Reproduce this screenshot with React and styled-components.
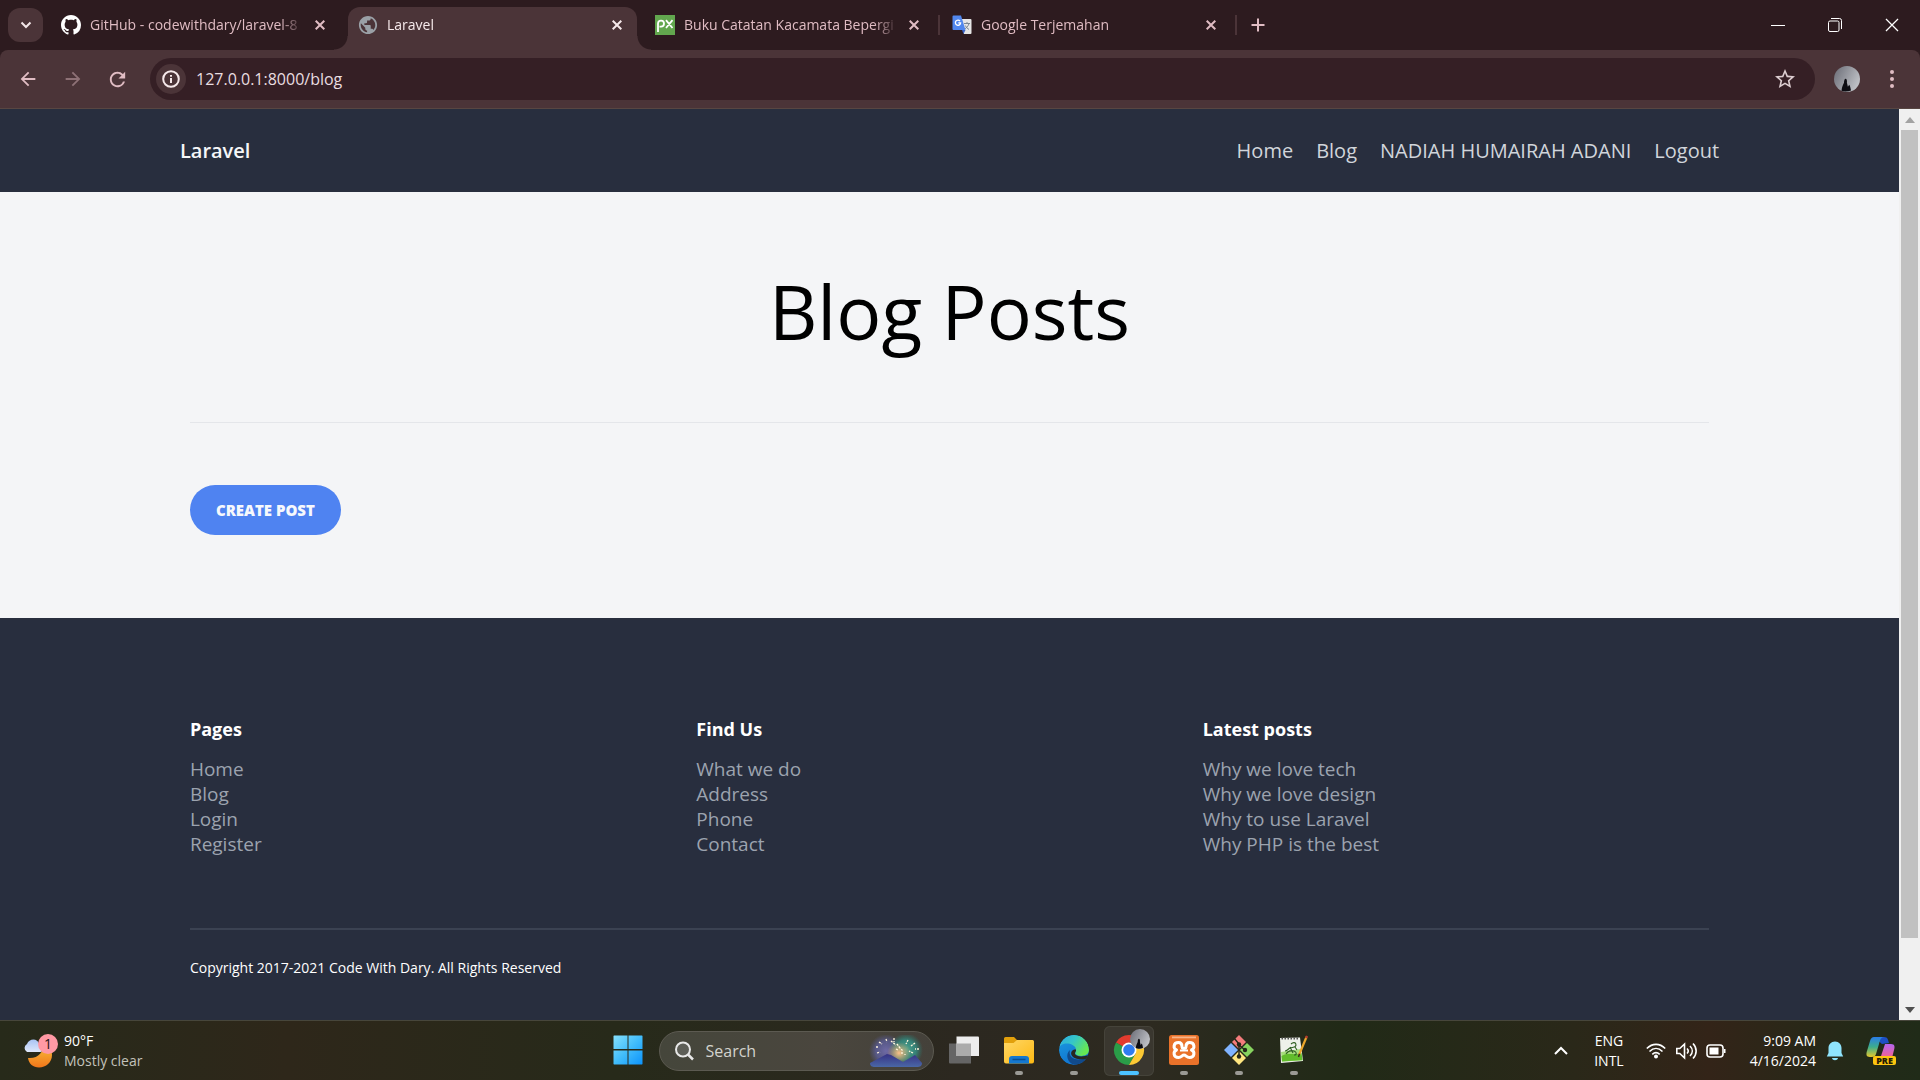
import React from "react";
import styled, { createGlobalStyle, css } from "styled-components";
import { MdArrowBack, MdArrowForward, MdPublic, MdRefresh, MdStarBorder } from "react-icons/md";

const color = {
  frame: "#2d1b1f",
  toolbar: "#4b3438",
  omnibox: "#351f25",
  pink: "#e0bcc3",
  navy: "#282e3e",
  page: "#f4f5f7",
};

const GlobalStyle = createGlobalStyle`
  *, *::before, *::after { box-sizing: border-box; }
  body {
    margin: 0;
    font-family: "Open Sans", "Noto Sans", sans-serif;
    background: ${color.page};
  }
  button, input { font: inherit; color: inherit; border: 0; padding: 0; background: none; }
  a { color: inherit; text-decoration: none; }
  h1, h2, p, ul { margin: 0; padding: 0; }
  svg { display: block; flex: none; }
`;

const Screen = styled.div`
  display: flex;
  flex-direction: column;
  min-height: 100vh;
`;

/* ---------- browser frame ---------- */

const TabStrip = styled.header`
  display: flex;
  align-items: flex-start;
  height: 50px;
  padding-left: 8px;
  background: ${color.frame};
  color: ${color.pink};
`;

const TabSearch = styled.button`
  display: grid;
  place-items: center;
  width: 35px;
  height: 34px;
  margin: 8px 8px 0 0;
  border-radius: 12px;
  background: ${color.toolbar};
  color: #f3e6e8;
`;

const TabList = styled.div`
  display: flex;
  gap: 8px;
`;

const Tab = styled.div`
  position: relative;
  display: flex;
  align-items: center;
  gap: 9px;
  width: 289px;
  height: 43px;
  margin-top: 7px;
  padding: 0 13px 7px 10px;
  border-radius: 12px 12px 0 0;
  font-size: 14px;
  line-height: 20px;

  ${(p) =>
    p.$active &&
    css`
      background: ${color.toolbar};
      color: #f6e9eb;
      &::before,
      &::after {
        content: "";
        position: absolute;
        bottom: 0;
        width: 14px;
        height: 14px;
      }
      &::before {
        left: -14px;
        background: radial-gradient(circle at 0 0, transparent 13px, ${color.toolbar} 14px);
      }
      &::after {
        right: -14px;
        background: radial-gradient(circle at 100% 0, transparent 13px, ${color.toolbar} 14px);
      }
    `}

  ${(p) =>
    p.$divided &&
    css`
      &::after {
        content: "";
        position: absolute;
        right: -6px;
        top: 8px;
        width: 2px;
        height: 20px;
        background: ${color.toolbar};
      }
    `}
`;

const TabTitle = styled.span`
  flex: 1;
  min-width: 0;
  overflow: hidden;
  white-space: nowrap;
  mask-image: linear-gradient(to right, #000 calc(100% - 24px), transparent);
`;

const PlainButton = styled.button`
  display: grid;
  place-items: center;
  width: 14px;
  height: 20px;
`;

const NewTab = styled(PlainButton)`
  width: 30px;
  margin: 15px 0 0 12px;
`;

const WindowControls = styled.div`
  display: flex;
  margin-left: auto;
  color: #fff;
`;

const WindowButton = styled(PlainButton)`
  width: 57px;
  height: 49px;
`;

const ToolbarBack = styled.div`
  background: ${color.frame};
`;

const Toolbar = styled.div`
  display: flex;
  align-items: center;
  height: 59px;
  padding: 0 20px 0 10px;
  border-bottom: 1px solid #584642;
  border-radius: 8px 8px 0 0;
  background: ${color.toolbar};
  color: ${color.pink};
`;

const ToolButton = styled.button`
  display: grid;
  place-items: center;
  width: 35px;
  height: 35px;
  margin-right: 10px;
  opacity: ${(p) => (p.disabled ? 0.45 : 1)};
  color: inherit;
`;

const Omnibox = styled.form`
  display: flex;
  flex: 1;
  align-items: center;
  height: 42px;
  margin-left: 5px;
  padding: 0 18px 0 6px;
  border-radius: 21px;
  background: ${color.omnibox};
`;

const SiteInfo = styled.button`
  display: grid;
  place-items: center;
  width: 30px;
  height: 30px;
  margin-right: 10px;
  border-radius: 50%;
  background: ${color.toolbar};
  color: #f6e9eb;
`;

const Address = styled.input`
  flex: 1;
  min-width: 0;
  height: 30px;
  font-size: 16px;
  color: #e9dde0;
  outline: none;
`;

const StarButton = styled(PlainButton)`
  width: 24px;
  height: 24px;
`;

const ProfileButton = styled(PlainButton)`
  width: 26px;
  height: 26px;
  margin: 0 24px 0 19px;
`;

const MenuButton = styled(PlainButton)`
  width: 16px;
  height: 26px;
`;

const Viewport = styled.div`
  display: flex;
  flex: 1;
`;

const Page = styled.div`
  display: flex;
  flex: 1;
  flex-direction: column;
  min-width: 0;
`;

const Scrollbar = styled.div`
  display: flex;
  flex-direction: column;
  align-items: center;
  width: 21px;
  background: #f0f0f0;
`;

const ScrollArrow = styled(PlainButton)`
  width: 21px;
  height: 21px;
  color: ${(p) => (p.$dim ? "#a3a3a3" : "#505050")};
`;

const ScrollThumb = styled.div`
  flex: 93;
  width: 17px;
  background: #c1c1c1;
`;

const ScrollRest = styled.div`
  flex: 7;
`;

/* ---------- blog page ---------- */

const SiteHeader = styled.header`
  background: ${color.navy};
`;

const SiteNav = styled.div`
  display: flex;
  align-items: center;
  justify-content: space-between;
  width: calc(80% + 20px);
  height: 83px;
  margin: 0 auto;
  color: #d1d5db;
`;

const Brand = styled.a`
  font-size: 20px;
  font-weight: 600;
  color: #f5f6f8;
`;

const NavLinks = styled.nav`
  display: flex;
  gap: 23px;
  font-size: 20px;
  line-height: 28px;
`;

const Main = styled.main`
  width: 80%;
  margin: 0 auto;
  padding-bottom: 83px;
`;

const TitleBlock = styled.div`
  padding: 69px 0 61px;
  border-bottom: 1px solid #e4e6ea;
  text-align: center;
`;

const Title = styled.h1`
  font-size: 75px;
  font-weight: 400;
  line-height: 100px;
  color: #000;
`;

const CreateLink = styled.a`
  display: inline-block;
  margin-top: 62px;
  padding: 0 26px;
  border-radius: 25px;
  background: #4f83f1;
  color: #f6f8fc;
  font-size: 15px;
  font-weight: 800;
  line-height: 50px;
  text-transform: uppercase;
  vertical-align: top;
`;

const Footer = styled.footer`
  flex: 1;
  padding-top: 99px;
  background: ${color.navy};
`;

const FooterInner = styled.div`
  width: 80%;
  margin: 0 auto;
`;

const FooterColumns = styled.div`
  display: grid;
  grid-template-columns: repeat(3, 1fr);
  padding-bottom: 71px;
  border-bottom: 2px solid #3b4252;
`;

const ColumnTitle = styled.h2`
  margin-bottom: 15px;
  font-size: 18px;
  font-weight: 700;
  line-height: 25px;
  color: #fff;
`;

const ColumnLinks = styled.ul`
  list-style: none;
  font-size: 19px;
  line-height: 25px;
  color: #9ca3af;
`;

const Copyright = styled.p`
  padding: 25px 0;
  font-size: 14px;
  line-height: 25px;
  color: #fff;
`;

/* ---------- taskbar ---------- */

const Taskbar = styled.footer`
  display: grid;
  grid-template-columns: 1fr auto 1fr;
  align-items: center;
  height: 60px;
  border-top: 1px solid #47463b;
  background: linear-gradient(
    90deg,
    #272a1a 0%,
    #2e271a 15%,
    #272a1a 32%,
    #2c2820 50%,
    #2d2a20 60%,
    #212a17 70%,
    #2a2819 82%,
    #332418 89%,
    #232a18 97%,
    #202b18 100%
  );
  color: #fff;
`;

const Weather = styled.button`
  display: flex;
  align-items: center;
  gap: 6px;
  justify-self: start;
  padding-left: 22px;
  text-align: left;
`;

const TwoLines = styled.span`
  display: grid;
  font-size: 14px;
  line-height: 20px;
  text-align: ${(p) => p.$align || "left"};
`;

const Muted = styled.span`
  color: #c3c2bb;
`;

const Apps = styled.div`
  display: flex;
  align-items: center;
  margin-left: 6px;
`;

const AppButton = styled.button`
  display: flex;
  flex-direction: column;
  align-items: center;
  width: 50px;
  height: 50px;
  margin: 0 ${(p) => p.$gap ?? 5}px 0 0;
  padding-top: 9px;
  border-radius: 6px;

  ${(p) =>
    p.$active &&
    css`
      background: #3a372f;
      box-shadow: inset 0 0 0 1px #45433a;
    `}

  &::after {
    content: "";
    width: ${(p) => (p.$active ? 20 : 8)}px;
    height: 4px;
    margin-top: 6px;
    border-radius: 2px;
    background: ${(p) => (p.$active ? "#4cc2ff" : p.$running ? "#9b9a95" : "transparent")};
  }
`;

const TaskSearch = styled.label`
  display: flex;
  align-items: center;
  gap: 12px;
  width: 275px;
  height: 40px;
  margin-right: 5px;
  padding: 0 10px 0 14px;
  border: 1px solid #5c5a51;
  border-radius: 20px;
  background: linear-gradient(90deg, #45463b, #4a463e 60%, #44413a);
`;

const SearchField = styled.input`
  flex: 1;
  width: 60px;
  font-size: 16px;
  color: #d8d8d3;
  outline: none;
  &::placeholder {
    color: #d3d3cd;
    opacity: 1;
  }
`;

const Tray = styled.div`
  display: flex;
  align-items: center;
  justify-self: end;
  padding-right: 24px;
`;

const TrayButton = styled.button`
  display: flex;
  align-items: center;
  gap: 10px;
  margin-left: ${(p) => p.$space || 0}px;
`;

/* ---------- drawings ---------- */

const Cross = ({ size = 10, weight = 2 }) => (
  <svg width={size} height={size} viewBox="0 0 10 10" stroke="currentColor" strokeWidth={weight} fill="none">
    <path d="M.7.7l8.6 8.6M9.3.7L.7 9.3" />
  </svg>
);

const GithubMark = () => (
  <svg width="20" height="20" viewBox="0 0 16 16" fill="#fff">
    <path d="M8 0C3.58 0 0 3.58 0 8c0 3.54 2.29 6.53 5.47 7.59.4.07.55-.17.55-.38 0-.19-.01-.82-.01-1.49-2.01.37-2.53-.49-2.69-.94-.09-.23-.48-.94-.82-1.13-.28-.15-.68-.52-.01-.53.63-.01 1.08.58 1.23.82.72 1.21 1.87.87 2.33.66.07-.52.28-.87.51-1.07-1.78-.2-3.64-.89-3.64-3.95 0-.87.31-1.59.82-2.15-.08-.2-.36-1.02.08-2.12 0 0 .67-.21 2.2.82.64-.18 1.32-.27 2-.27s1.36.09 2 .27c1.53-1.04 2.2-.82 2.2-.82.44 1.1.16 1.92.08 2.12.51.56.82 1.27.82 2.15 0 3.07-1.87 3.75-3.65 3.95.29.25.54.73.54 1.48 0 1.07-.01 1.93-.01 2.2 0 .21.15.46.55.38A8.01 8.01 0 0 0 16 8c0-4.42-3.58-8-8-8z" />
  </svg>
);

const Globe = () => (
  <svg width="20" height="20" viewBox="1 1 22 22">
    <MdPublic size={24} color="#9aa0a6" />
  </svg>
);

const PxLogo = () => (
  <svg width="20" height="20" viewBox="0 0 20 20">
    <path fill="#62a74e" d="M0 0h20v20H0z" />
    <path
      d="M3 17V8.500a3 3 0 1 1 3 3.200H4.500M11 5.200l6.500 7.800M17.500 5.200L11 13"
      fill="none"
      stroke="#fff"
      strokeWidth="1.800"
    />
  </svg>
);

const TranslateLogo = () => (
  <svg width="20" height="20" viewBox="0 0 20 20">
    <path fill="#e6e6e6" d="M9 4h9.500a1 1 0 0 1 1 1v13a1 1 0 0 1-1 1H12z" />
    <path d="M12 8.500h6M15 7v1.500M17 8.500c-.6 2.500-2.500 4.500-4.500 5.500M13.300 10.500c.8 1.800 2 3 3.700 4" stroke="#7b8794" fill="none" />
    <path fill="#5187ee" d="M1.500.5H9L13.500 15H1.500a1 1 0 0 1-1-1V1.500a1 1 0 0 1 1-1z" />
    <path fill="#3a63c8" d="M10 15h3.500L11.500 19z" />
    <path d="M8 6a2.600 2.600 0 1 0 .6 1.900H6.300" fill="none" stroke="#fff" strokeWidth="1.300" />
  </svg>
);

const Silhouette = ({ size = 26 }) => (
  <svg width={size} height={size} viewBox="0 0 26 26">
    <defs>
      <linearGradient id="sky" x1="0" y1="0" x2="1" y2=".5">
        <stop offset="0" stopColor="#696b75" />
        <stop offset="1" stopColor="#bdbfc4" />
      </linearGradient>
    </defs>
    <circle cx="13" cy="13" r="13" fill="url(#sky)" />
    <path d="M7.500 24.800c.5-4 1.500-6 2.500-8 0-2 .6-4 1.600-4s1.700 2 1.300 4l1 4 1.300-2c1 1 1.200 3 1.800 5.700-3 1.300-7 1.500-9.500.3z" fill="#0c0c12" />
  </svg>
);

const WeatherIcon = () => (
  <svg width="36" height="36" viewBox="0 0 36 36">
    <defs>
      <linearGradient id="moon" x1="0" y1="0" x2="0" y2="1">
        <stop offset="0" stopColor="#f9c23c" />
        <stop offset="1" stopColor="#f0761a" />
      </linearGradient>
      <linearGradient id="cloud" x1="0" y1="0" x2="0" y2="1">
        <stop offset="0" stopColor="#a9c3f3" />
        <stop offset="1" stopColor="#dfe8fb" />
      </linearGradient>
    </defs>
    <path d="M21 11c1 8-5 15-15 14 1 6 5 9.500 11 9.500 7 0 13-5 13-12.500 0-5-3-9-9-11z" fill="url(#moon)" />
    <path d="M5 19a4.500 4.500 0 0 1 0-8c2-6 11-6 12 0 5 0 5 8 1 8z" fill="url(#cloud)" />
    <circle cx="26" cy="11" r="10" fill="#ff99a4" />
    <text x="26" y="16" textAnchor="middle" fontSize="14" fill="#1c1214">1</text>
  </svg>
);

const WindowsLogo = () => (
  <svg width="30" height="30" viewBox="0 0 30 30">
    <defs>
      <linearGradient id="win" x1="0" y1="0" x2="1" y2="1">
        <stop offset="0" stopColor="#86e1fd" />
        <stop offset=".5" stopColor="#42bdfb" />
        <stop offset="1" stopColor="#0c93fb" />
      </linearGradient>
    </defs>
    <path fill="url(#win)" d="M1 .5h13.500V14H.5V1zM15.500.5H29l.5.5v13h-14zM.5 15.500h14v14H1l-.5-.5zM15.500 15.500h14V29l-.5.5H15.500z" />
  </svg>
);

const Magnifier = () => (
  <svg width="20" height="20" viewBox="0 0 20 20" fill="none" stroke="#e8e8e8" strokeWidth="2">
    <circle cx="9" cy="8.500" r="7" fill="#5d5e57" />
    <path d="M14 13.500l5 5" strokeWidth="2.500" />
  </svg>
);

const Fireworks = () => (
  <svg width="54" height="32" viewBox="0 0 54 32">
    <defs>
      <radialGradient id="glowA">
        <stop offset="0" stopColor="#6f6aa5" />
        <stop offset=".6" stopColor="#5b5d98" stopOpacity=".8" />
        <stop offset="1" stopColor="#56598c" stopOpacity="0" />
      </radialGradient>
      <radialGradient id="glowB">
        <stop offset="0" stopColor="#4da792" />
        <stop offset=".6" stopColor="#34877c" stopOpacity=".9" />
        <stop offset="1" stopColor="#2d766c" stopOpacity="0" />
      </radialGradient>
      <radialGradient id="glowC">
        <stop offset="0" stopColor="#ffc18a" />
        <stop offset="1" stopColor="#e5a35f" stopOpacity="0" />
      </radialGradient>
      <linearGradient id="hill" x1="0" y1="0" x2="0" y2="1">
        <stop offset="0" stopColor="#373284" />
        <stop offset="1" stopColor="#4a67a6" />
      </linearGradient>
    </defs>
    <circle cx="17" cy="16" r="17" fill="url(#glowA)" />
    <circle cx="37" cy="15" r="17" fill="url(#glowB)" />
    <ellipse cx="30" cy="18" rx="12" ry="11" fill="url(#glowC)" />
    <path d="M1 28L18 19l4 1 12 7 12-7 7 8c0 3-2 4-5 4H6c-3 0-5-1-5-4z" fill="url(#hill)" />
    <path
      d="M10 7l3 2M7 12h3M8 18l3-1M17 4l1 3M25 3v4M22 6l5 4M28 9l3 4M30 12l4 4M39 5l-2 4M46 8l-4 3M50 14h-4M44 18l-4-2M33 17v2M36 19v1M27 14l2 1"
      stroke="#fff5dc"
      strokeWidth="1.300"
      strokeDasharray="2 1"
    />
  </svg>
);

const TaskView = () => (
  <svg width="30" height="30" viewBox="0 0 30 30">
    <path fill="#656565" d="M0 8.500h22v20H1a1 1 0 0 1-1-1z" />
    <path fill="#ededed" d="M7.500 1.500H29a1 1 0 0 1 1 1V21H7.500z" />
    <path fill="#ababab" d="M7.500 8.500H22V21H7.500z" />
  </svg>
);

const Folder = () => (
  <svg width="30" height="30" viewBox="0 0 30 30">
    <defs>
      <linearGradient id="folder" x1="0" y1="0" x2="1" y2="1">
        <stop offset="0" stopColor="#ffd766" />
        <stop offset="1" stopColor="#fdb913" />
      </linearGradient>
    </defs>
    <path fill="#e2a00b" d="M0 3.500A1.500 1.500 0 0 1 1.500 2H10l3 3h16v5H0z" />
    <path fill="url(#folder)" d="M0 8h9.500L13 5h15.500A1.500 1.500 0 0 1 30 6.500v20a2 2 0 0 1-2 2H2a2 2 0 0 1-2-2z" />
    <path fill="#1578cf" d="M5 28.500V24a3 3 0 0 1 3-3h14a3 3 0 0 1 3 3v4.500z" />
    <path d="M8.500 24.500h13" stroke="#0a4f93" strokeWidth="1.500" />
  </svg>
);

const Edge = () => (
  <svg width="30" height="30" viewBox="0 0 30 30">
    <defs>
      <linearGradient id="edgeTop" x1="0" y1="0" x2="1" y2=".5">
        <stop offset="0" stopColor="#2aa8e6" />
        <stop offset=".5" stopColor="#36c6c7" />
        <stop offset="1" stopColor="#66e752" />
      </linearGradient>
      <linearGradient id="edgeSide" x1="0" y1="0" x2=".4" y2="1">
        <stop offset="0" stopColor="#1b9de2" />
        <stop offset="1" stopColor="#1173cf" />
      </linearGradient>
      <clipPath id="edgeRound">
        <circle cx="15" cy="15" r="15" />
      </clipPath>
    </defs>
    <g clipPath="url(#edgeRound)">
      <circle cx="15" cy="15" r="15" fill="url(#edgeSide)" />
      <path d="M11 15c-2 7 4 12 17 8-3 5-8 7-12 7-8-2-10-11-5-15z" fill="#114a8b" />
      <path d="M0 14C1 8 9 7.500 13.500 10c3 1.500 4 4 3.500 6-.3 1.500-1 2-.5 3C19 22 30 22 30 15 30 6 23 0 15 0 7 0 1 5 0 14z" fill="url(#edgeTop)" />
      <path d="M17 14.500c.5 2-1.500 2.500-1 4.500 1.500 3 8 3 14 1v3c-6 2-15 2-17.500-3-1.200-3 1-6 4.500-5.500z" fill="#29281f" />
    </g>
  </svg>
);

const Chrome = () => (
  <svg width="36" height="30" viewBox="0 0 36 30" overflow="visible">
    <path d="M18 15L5 7.500A15 15 0 0 1 31 7.500H18z" fill="#e33b2e" />
    <path d="M5 7.500A15 15 0 0 0 18 30l6.500-11.250L18 15z" fill="#2a9d48" />
    <path d="M31 7.500A15 15 0 0 1 18 30l6.500-11.250V7.500z" fill="#fcc934" />
    <circle cx="18" cy="15" r="7.500" fill="#fff" />
    <circle cx="18" cy="15" r="5.800" fill="#2f7cf0" />
    <g transform="translate(19 -6)">
      <Silhouette size={20} />
    </g>
  </svg>
);

const Xampp = () => (
  <svg width="30" height="30" viewBox="0 0 30 30">
    <rect width="30" height="30" rx="2.500" fill="#e9722a" />
    <path d="M3 1.500h24v1.800H3z" fill="#f7b48a" />
    <path
      d="M9.500 7.500c-5.500 0-5.500 6-2 7.500-3.500 1.500-3.500 7.500 2 7.500 3 0 3.500-2.500 5.500-2.500s2.500 2.500 5.500 2.500c5.500 0 5.500-6 2-7.500 3.500-1.500 3.500-7.500-2-7.500-2.800 0-3.500 2.500-3.500 4s-1 2-2 2-2-.5-2-2 -.7-4-3.500-4z"
      fill="none"
      stroke="#fff"
      strokeWidth="3"
      strokeLinejoin="round"
    />
    <path d="M11 15.500h8" stroke="#fff" strokeWidth="2" />
  </svg>
);

const GitBash = () => (
  <svg width="30" height="30" viewBox="0 0 30 30">
    <path fill="#f47c7c" d="M15 0l7 7-7 7-7-7z" />
    <path fill="#80b3ff" d="M7 8l7 7-7 7-7-7z" />
    <path fill="#87d35f" d="M23 8l7 7-7 7-7-7z" />
    <path fill="#ffe680" d="M15 16l7 7-7 7-7-7z" />
    <path d="M10 3l5 6v13M15 10l6 5" stroke="#25271a" strokeWidth="1.500" fill="none" />
    <g fill="#25271a">
      <circle cx="15" cy="9.500" r="2.200" />
      <circle cx="15" cy="21.500" r="2.200" />
      <circle cx="21" cy="15" r="2.200" />
    </g>
  </svg>
);

const NotepadPlus = () => (
  <svg width="30" height="30" viewBox="0 0 30 30">
    <path fill="#eef1ea" d="M1 3l20-.5 3 23.500-22 2z" />
    <path fill="#a6dc7c" d="M2 17l19.500-3 1.700 11.500L3 26.500z" />
    <path fill="#62bd2c" d="M2.500 21c7-4 13 0 20-3l1 7L3 26.500z" />
    <path d="M2.500 3.500h18" stroke="#555" strokeWidth="1.800" strokeDasharray="1.500 1.500" />
    <path d="M12 9c2-2 5-2 5 1s-4 2-6 3-3 3-5 3M7 19c2-3 5-4 8-3s3 4 0 4M11 12l3 6M16 12l2 3" stroke="#2f5f22" strokeWidth="1.100" fill="none" />
    <path d="M27.500 2L20 20" stroke="#eca72c" strokeWidth="2.200" />
    <path d="M28 .8l-1 2.400" stroke="#b5392f" strokeWidth="2.200" />
    <path d="M20.500 18.800L19.500 22" stroke="#3a2d1b" strokeWidth="1.500" />
  </svg>
);

const StatusIcons = () => (
  <svg width="80" height="20" viewBox="0 0 80 20" fill="none" stroke="#fff" strokeWidth="1.600">
    <path d="M.8 7.500c5.500-5.500 13-5.500 18.400 0M3.500 10.500c4-4 9-4 13 0M6.300 13.300c2.300-2.200 5-2.200 7.400 0" />
    <circle cx="10" cy="15.500" r="1.200" fill="#fff" />
    <path d="M30.800 7.500h3L38.500 3v14l-4.700-4.500h-3zM41 7.500c1.500 1.500 1.500 3.500 0 5M44 5c3 3 3 7 0 10M47 2.500c4.200 4.500 4.200 10.500 0 15" />
    <rect x="61" y="4" width="16" height="12" rx="3" />
    <path fill="#fff" stroke="none" d="M63.500 6.500h9v7h-9zM78 8h1.500v4H78z" />
  </svg>
);

const Bell = () => (
  <svg width="18" height="20" viewBox="0 0 18 20" fill="#8fe4fd">
    <path d="M9 .5c4 0 6.500 3 6.500 6.500v5l1.700 3.500H.8L2.500 12V7C2.500 3.500 5 .5 9 .5zM6 17h6c-.5 3-5.500 3-6 0z" />
  </svg>
);

const Copilot = () => (
  <svg width="30" height="30" viewBox="0 0 30 30">
    <defs>
      <linearGradient id="copA" x1="0" y1="0" x2="0" y2="1">
        <stop offset="0" stopColor="#2a7de8" />
        <stop offset=".5" stopColor="#3dae8c" />
        <stop offset="1" stopColor="#e6c82a" />
      </linearGradient>
      <linearGradient id="copB" x1="0" y1="0" x2="0" y2="1">
        <stop offset="0" stopColor="#b565f0" />
        <stop offset="1" stopColor="#f4628c" />
      </linearGradient>
    </defs>
    <path fill="#1d4fc4" d="M8 1h10c4 0 4 3 5 6l-7 1z" />
    <path fill="url(#copA)" d="M8 1h10c-3 0-4 3-5 7l-3 10c-1 3-3 3-6 3-4 0-4-3-3-6l3-10c1-3 2-4 4-4z" />
    <path fill="url(#copB)" d="M19 8h6c4 0 4 3 3 6l-2 8H12c3 0 3-2 4-5z" />
    <rect x="7" y="20" width="23" height="9" rx="2" fill="#fcc50f" />
    <text x="18.500" y="28" textAnchor="middle" fontSize="9" fontWeight="800" fill="#241c05">PRE</text>
  </svg>
);

/* ---------- data ---------- */

const tabs = [
  { title: "GitHub - codewithdary/laravel-8", icon: <GithubMark /> },
  { title: "Laravel", icon: <Globe />, active: true },
  { title: "Buku Catatan Kacamata Bepergi", icon: <PxLogo />, divided: true },
  { title: "Google Terjemahan", icon: <TranslateLogo />, divided: true },
];

const navItems = ["Home", "Blog", "NADIAH HUMAIRAH ADANI", "Logout"];

const footerColumns = [
  { title: "Pages", links: ["Home", "Blog", "Login", "Register"] },
  { title: "Find Us", links: ["What we do", "Address", "Phone", "Contact"] },
  {
    title: "Latest posts",
    links: ["Why we love tech", "Why we love design", "Why to use Laravel", "Why PHP is the best"],
  },
];

const apps = [
  { name: "Task view", icon: <TaskView /> },
  { name: "File Explorer", icon: <Folder />, running: true },
  { name: "Microsoft Edge", icon: <Edge />, running: true },
  { name: "Google Chrome", icon: <Chrome />, active: true },
  { name: "XAMPP", icon: <Xampp />, running: true },
  { name: "Git Bash", icon: <GitBash />, running: true },
  { name: "Notepad++", icon: <NotepadPlus />, running: true },
];

/* ---------- sections ---------- */

const BrowserFrame = () => (
  <>
    <TabStrip>
      <TabSearch aria-label="Search tabs">
        <svg width="12" height="8" viewBox="0 0 12 8" fill="none" stroke="currentColor" strokeWidth="2">
          <path d="M1.500 1.500L6 6l4.500-4.500" />
        </svg>
      </TabSearch>
      <TabList>
        {tabs.map((t) => (
          <Tab key={t.title} $active={t.active} $divided={t.divided}>
            {t.icon}
            <TabTitle>{t.title}</TabTitle>
            <PlainButton aria-label={`Close ${t.title}`}>
              <Cross />
            </PlainButton>
          </Tab>
        ))}
      </TabList>
      <NewTab aria-label="New tab">
        <svg width="14" height="14" viewBox="0 0 14 14" stroke="currentColor" strokeWidth="2">
          <path d="M7 .5v13M.5 7h13" />
        </svg>
      </NewTab>
      <WindowControls>
        <WindowButton aria-label="Minimize">
          <svg width="14" height="14" viewBox="0 0 14 14" stroke="currentColor">
            <path d="M0 7.500h14" />
          </svg>
        </WindowButton>
        <WindowButton aria-label="Restore">
          <svg width="14" height="14" viewBox="0 0 14 14" fill="none" stroke="currentColor">
            <rect x=".5" y="3" width="10.500" height="10.500" rx="1.500" />
            <path d="M3 .5h8.500a2 2 0 0 1 2 2V11" />
          </svg>
        </WindowButton>
        <WindowButton aria-label="Close window">
          <Cross size={14} weight={0.9} />
        </WindowButton>
      </WindowControls>
    </TabStrip>
    <ToolbarBack>
      <Toolbar>
        <ToolButton aria-label="Back">
          <MdArrowBack size={22} />
        </ToolButton>
        <ToolButton aria-label="Forward" disabled>
          <MdArrowForward size={22} />
        </ToolButton>
        <ToolButton aria-label="Reload">
          <MdRefresh size={23} />
        </ToolButton>
        <Omnibox>
          <SiteInfo type="button" aria-label="View site information">
            <svg width="18" height="18" viewBox="0 0 18 18" fill="none" stroke="currentColor" strokeWidth="2">
              <circle cx="9" cy="9" r="7.800" />
              <path d="M9 8v5M9 5v1.800" />
            </svg>
          </SiteInfo>
          <Address aria-label="Address" defaultValue="127.0.0.1:8000/blog" />
          <StarButton type="button" aria-label="Bookmark this tab">
            <MdStarBorder size={24} color="#dccdd0" />
          </StarButton>
        </Omnibox>
        <ProfileButton aria-label="Profile">
          <Silhouette />
        </ProfileButton>
        <MenuButton aria-label="Browser menu">
          <svg width="4" height="20" viewBox="0 0 4 20" fill="currentColor">
            <circle cx="2" cy="3" r="2" />
            <circle cx="2" cy="10" r="2" />
            <circle cx="2" cy="17" r="2" />
          </svg>
        </MenuButton>
      </Toolbar>
    </ToolbarBack>
  </>
);

const BlogPage = () => (
  <Page>
    <SiteHeader>
      <SiteNav>
        <Brand href="#">Laravel</Brand>
        <NavLinks>
          {navItems.map((n) => (
            <a key={n} href="#">
              {n}
            </a>
          ))}
        </NavLinks>
      </SiteNav>
    </SiteHeader>
    <Main>
      <TitleBlock>
        <Title>Blog Posts</Title>
      </TitleBlock>
      <CreateLink href="#">Create Post</CreateLink>
    </Main>
    <Footer>
      <FooterInner>
        <FooterColumns>
          {footerColumns.map((c) => (
            <section key={c.title}>
              <ColumnTitle>{c.title}</ColumnTitle>
              <ColumnLinks>
                {c.links.map((l) => (
                  <li key={l}>
                    <a href="#">{l}</a>
                  </li>
                ))}
              </ColumnLinks>
            </section>
          ))}
        </FooterColumns>
        <Copyright>Copyright 2017-2021 Code With Dary. All Rights Reserved</Copyright>
      </FooterInner>
    </Footer>
  </Page>
);

const SystemBar = () => (
  <Taskbar>
    <Weather>
      <WeatherIcon />
      <TwoLines>
        <span>90°F</span>
        <Muted>Mostly clear</Muted>
      </TwoLines>
    </Weather>
    <Apps>
      <AppButton aria-label="Start" $gap={6}>
        <WindowsLogo />
      </AppButton>
      <TaskSearch>
        <Magnifier />
        <SearchField type="text" placeholder="Search" aria-label="Search" />
        <Fireworks />
      </TaskSearch>
      {apps.map((a) => (
        <AppButton key={a.name} aria-label={a.name} $running={a.running} $active={a.active}>
          {a.icon}
        </AppButton>
      ))}
    </Apps>
    <Tray>
      <TrayButton aria-label="Show hidden icons">
        <svg width="14" height="9" viewBox="0 0 14 9" fill="none" stroke="#fff" strokeWidth="2">
          <path d="M1 8l6-6 6 6" />
        </svg>
      </TrayButton>
      <TrayButton $space={26}>
        <TwoLines $align="center">
          <span>ENG</span>
          <span>INTL</span>
        </TwoLines>
      </TrayButton>
      <TrayButton $space={22} aria-label="Network, volume and battery">
        <StatusIcons />
      </TrayButton>
      <TrayButton $space={24}>
        <TwoLines $align="right">
          <span>9:09 AM</span>
          <span>4/16/2024</span>
        </TwoLines>
        <Bell />
      </TrayButton>
      <TrayButton $space={22} aria-label="Copilot">
        <Copilot />
      </TrayButton>
    </Tray>
  </Taskbar>
);

export default function App() {
  return (
    <Screen>
      <GlobalStyle />
      <BrowserFrame />
      <Viewport>
        <BlogPage />
        <Scrollbar>
          <ScrollArrow $dim aria-label="Scroll up">
            <svg width="10" height="6" viewBox="0 0 10 6" fill="currentColor">
              <path d="M0 6l5-6 5 6z" />
            </svg>
          </ScrollArrow>
          <ScrollThumb />
          <ScrollRest />
          <ScrollArrow aria-label="Scroll down">
            <svg width="10" height="6" viewBox="0 0 10 6" fill="currentColor">
              <path d="M0 0l5 6 5-6z" />
            </svg>
          </ScrollArrow>
        </Scrollbar>
      </Viewport>
      <SystemBar />
    </Screen>
  );
}
